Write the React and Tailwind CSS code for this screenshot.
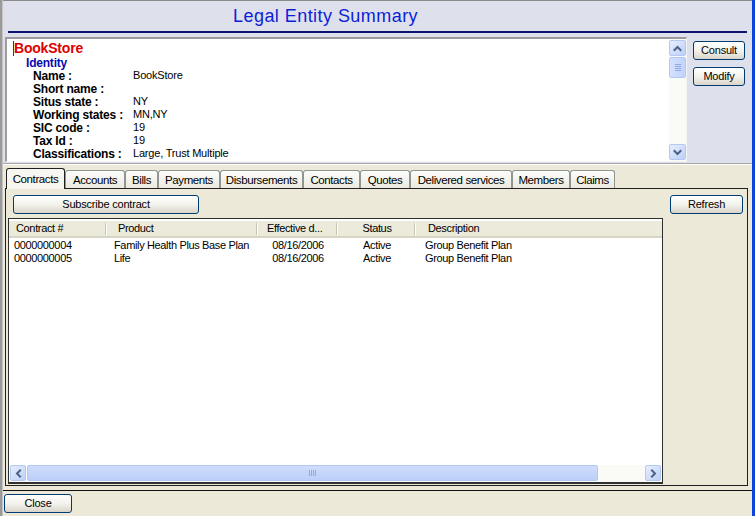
import React from "react";

function Chev({ dir }) {
  const paths = {
    up: "M1.5 6 L4.5 3 L7.5 6",
    down: "M1.5 3 L4.5 6 L7.5 3",
    left: "M6 1.5 L3 4.5 L6 7.5",
    right: "M3 1.5 L6 4.5 L3 7.5",
  };
  return (
    <svg width="9" height="9" viewBox="0 0 9 9">
      <path d={paths[dir]} stroke="#4d6185" strokeWidth="2" fill="none" strokeLinecap="square" />
    </svg>
  );
}

function SBtn({ dir, className }) {
  return (
    <div
      className={
        "flex items-center justify-center rounded-[2px] border border-[#b4c8f6] bg-gradient-to-br from-[#e8effd] to-[#bccff8] " +
        className
      }
    >
      <Chev dir={dir} />
    </div>
  );
}

function XPBtn({ children, className }) {
  return (
    <div
      className={
        "flex items-center justify-center rounded-[3px] border border-[#003c74] bg-gradient-to-b from-white via-[#f3f2ec] to-[#d9d5ca] text-[11px] tracking-[-0.2px] text-black " +
        className
      }
    >
      {children}
    </div>
  );
}

const identity = [
  ["Name :", "BookStore"],
  ["Short name :", ""],
  ["Situs state :", "NY"],
  ["Working states :", "MN,NY"],
  ["SIC code :", "19"],
  ["Tax Id :", "19"],
  ["Classifications :", "Large, Trust Multiple"],
];

const tabs = [
  ["Contracts", 59],
  ["Accounts", 60],
  ["Bills", 33],
  ["Payments", 62],
  ["Disbursements", 83],
  ["Contacts", 57],
  ["Quotes", 50],
  ["Delivered services", 102],
  ["Members", 58],
  ["Claims", 45],
];

const data = [
  ["0000000004", "Family Health Plus Base Plan", "08/16/2006", "Active", "Group Benefit Plan"],
  ["0000000005", "Life", "08/16/2006", "Active", "Group Benefit Plan"],
];

export default function App() {
  return (
    <div className="w-[755px] h-[516px] flex overflow-hidden bg-[#ece9d8] font-['Liberation_Sans',Arial,sans-serif] text-black">
      {/* left frame */}
      <div className="w-[3px] h-full flex">
        <div className="w-[2px] h-full bg-[#9a9a9a]" />
        <div className="w-[1px] h-full bg-[#c4c4c4]" />
      </div>

      {/* main */}
      <div className="w-[749px] h-full flex flex-col">
        <div className="h-[1px] bg-[#8a8a8a]" />
        {/* header + top section */}
        <div className="bg-[#dee1ec] flex flex-col">
          <div className="h-[30px] flex items-center pl-[230px]">
            <span className="text-[18px] leading-none text-[#0d1ed8] tracking-[0.45px]">Legal Entity Summary</span>
          </div>
          <div className="h-[2px] ml-[5px] w-[739px] bg-[#0a1470]" />
          <div className="h-[4px]" />
          <div className="h-[125px] flex">
            {/* text area */}
            <div className="ml-[2px] w-[682px] h-[125px] flex border-t-2 border-l-2 border-[#9c9c9c] border-b border-r border-b-[#f4f4f4] border-r-[#f4f4f4] bg-white">
              <div className="flex-1 flex flex-col pt-[1px] tracking-[-0.2px]">
                <div className="h-[16px] flex items-center pl-[6px]">
                  <span className="inline-block w-[1px] h-[15px] bg-[#c00000]" />
                  <span className="text-[14px] font-bold text-[#e00000]">BookStore</span>
                </div>
                <div className="h-[13px] flex items-center pl-[19px]">
                  <span className="text-[12px] font-bold text-[#0a0ab0]">Identity</span>
                </div>
                {identity.map(([l, v]) => (
                  <div key={l} className="h-[13px] flex items-center pl-[26px]">
                    <span className="w-[100px] shrink-0 text-[12px] font-bold">{l}</span>
                    <span className="text-[11px]">{v}</span>
                  </div>
                ))}
              </div>
              {/* v scrollbar */}
              <div className="w-[17px] h-full flex flex-col bg-[#fafaf6] py-[1px]">
                <SBtn dir="up" className="h-[16px] w-[17px]" />
                <div className="h-[21px] w-[17px] mt-[1px] rounded-[2px] border border-[#b4c8f6] bg-gradient-to-r from-[#d4e0fd] to-[#c2d4fb] flex flex-col items-center justify-center gap-[1px]">
                  <div className="w-[6px] h-[1px] bg-[#8fa9e8]" />
                  <div className="w-[6px] h-[1px] bg-[#8fa9e8]" />
                  <div className="w-[6px] h-[1px] bg-[#8fa9e8]" />
                  <div className="w-[6px] h-[1px] bg-[#8fa9e8]" />
                </div>
                <div className="flex-1" />
                <SBtn dir="down" className="h-[16px] w-[17px]" />
              </div>
            </div>
            {/* buttons */}
            <div className="ml-[6px] pt-[4px] flex flex-col gap-[7px]">
              <XPBtn className="w-[52px] h-[19px]">Consult</XPBtn>
              <XPBtn className="w-[52px] h-[19px]">Modify</XPBtn>
            </div>
          </div>
          <div className="h-[1px]" />
        </div>
        <div className="h-[1px] bg-[#a6a6a6]" />
        <div className="h-[1px] bg-white" />

        {/* tabs row */}
        <div className="h-[23px] flex items-end pl-[3px]">
          {tabs.map(([t, w], i) =>
            i === 0 ? (
              <div
                key={t}
                style={{ width: w }}
                className="relative z-10 -mb-px h-[21px] flex items-center justify-center rounded-t-[3px] border border-b-0 border-[#202020] bg-[#f7f6f1] text-[11.5px] tracking-[-0.4px] pt-[1px]"
              >
                {t}
              </div>
            ) : (
              <div
                key={t}
                style={{ width: w }}
                className="h-[18px] flex items-center justify-center rounded-t-[3px] border border-b-0 border-[#8f9495] bg-gradient-to-b from-[#fdfdfb] to-[#ebe9df] text-[11.5px] tracking-[-0.4px] pt-[2px]"
              >
                {t}
              </div>
            )
          )}
        </div>

        {/* tab pane */}
        <div className="ml-[2px] w-[743px] h-[298px] border border-[#202020] flex">
          <div className="w-[658px] flex flex-col">
            <div className="pt-[6px] pl-[7px]">
              <XPBtn className="w-[186px] h-[19px]">Subscribe contract</XPBtn>
            </div>
            <div className="mt-[4px] ml-[2px] w-[655px] flex-1 mb-[1px] border border-[#303030] border-b-2 bg-white flex flex-col text-[11px] tracking-[-0.35px]">
              {/* header */}
              <div className="h-[17px] mt-[2px] flex bg-[#ebeadb] border-b-2 border-[#d8d4c4]">
                <div className="w-[98px] flex items-center pl-[7px] relative">
                  Contract #
                  <span className="absolute right-0 top-[2px] bottom-[1px] w-[2px] border-l border-[#c9c5b4] bg-white" />
                </div>
                <div className="w-[151px] flex items-center pl-[11px] relative">
                  Product
                  <span className="absolute right-0 top-[2px] bottom-[1px] w-[2px] border-l border-[#c9c5b4] bg-white" />
                </div>
                <div className="w-[80px] flex items-center pl-[9px] relative">
                  Effective d...
                  <span className="absolute right-0 top-[2px] bottom-[1px] w-[2px] border-l border-[#c9c5b4] bg-white" />
                </div>
                <div className="w-[78px] flex items-center justify-center relative">
                  Status
                  <span className="absolute right-0 top-[2px] bottom-[1px] w-[2px] border-l border-[#c9c5b4] bg-white" />
                </div>
                <div className="flex-1 flex items-center pl-[12px]">Description</div>
              </div>
              <div className="pt-[1px] flex-1">
                {data.map((r) => (
                  <div key={r[0]} className="h-[13px] flex items-center">
                    <div className="w-[98px] pl-[5px]">{r[0]}</div>
                    <div className="w-[151px] pl-[7px] whitespace-nowrap">{r[1]}</div>
                    <div className="w-[80px] text-center">{r[2]}</div>
                    <div className="w-[78px] text-center">{r[3]}</div>
                    <div className="flex-1 pl-[9px]">{r[4]}</div>
                  </div>
                ))}
              </div>
              {/* h scrollbar */}
              <div className="h-[17px] flex bg-[#fafaf6] px-[1px]">
                <SBtn dir="left" className="w-[16px] h-[16px]" />
                <div className="w-[571px] h-[16px] ml-[1px] rounded-[2px] border border-[#b4c8f6] bg-gradient-to-b from-[#cfdcfd] to-[#bccff9] flex items-center justify-center gap-[1px]">
                  <div className="w-[1px] h-[6px] bg-[#8fa9e8]" />
                  <div className="w-[1px] h-[6px] bg-[#8fa9e8]" />
                  <div className="w-[1px] h-[6px] bg-[#8fa9e8]" />
                  <div className="w-[1px] h-[6px] bg-[#8fa9e8]" />
                </div>
                <div className="flex-1" />
                <SBtn dir="right" className="w-[16px] h-[16px]" />
              </div>
            </div>
          </div>
          <div className="flex-1 pt-[6px] pl-[6px]">
            <XPBtn className="w-[73px] h-[19px]">Refresh</XPBtn>
          </div>
        </div>

        <div className="h-[4px]" />
        <div className="h-[1px] bg-[#111111]" />
        <div className="h-[25px] pt-[3px] pl-[1px]">
          <XPBtn className="w-[68px] h-[19px]">Close</XPBtn>
        </div>
      </div>

      {/* right frame */}
      <div className="w-[3px] h-full bg-[#0b44dc]" />
    </div>
  );
}
